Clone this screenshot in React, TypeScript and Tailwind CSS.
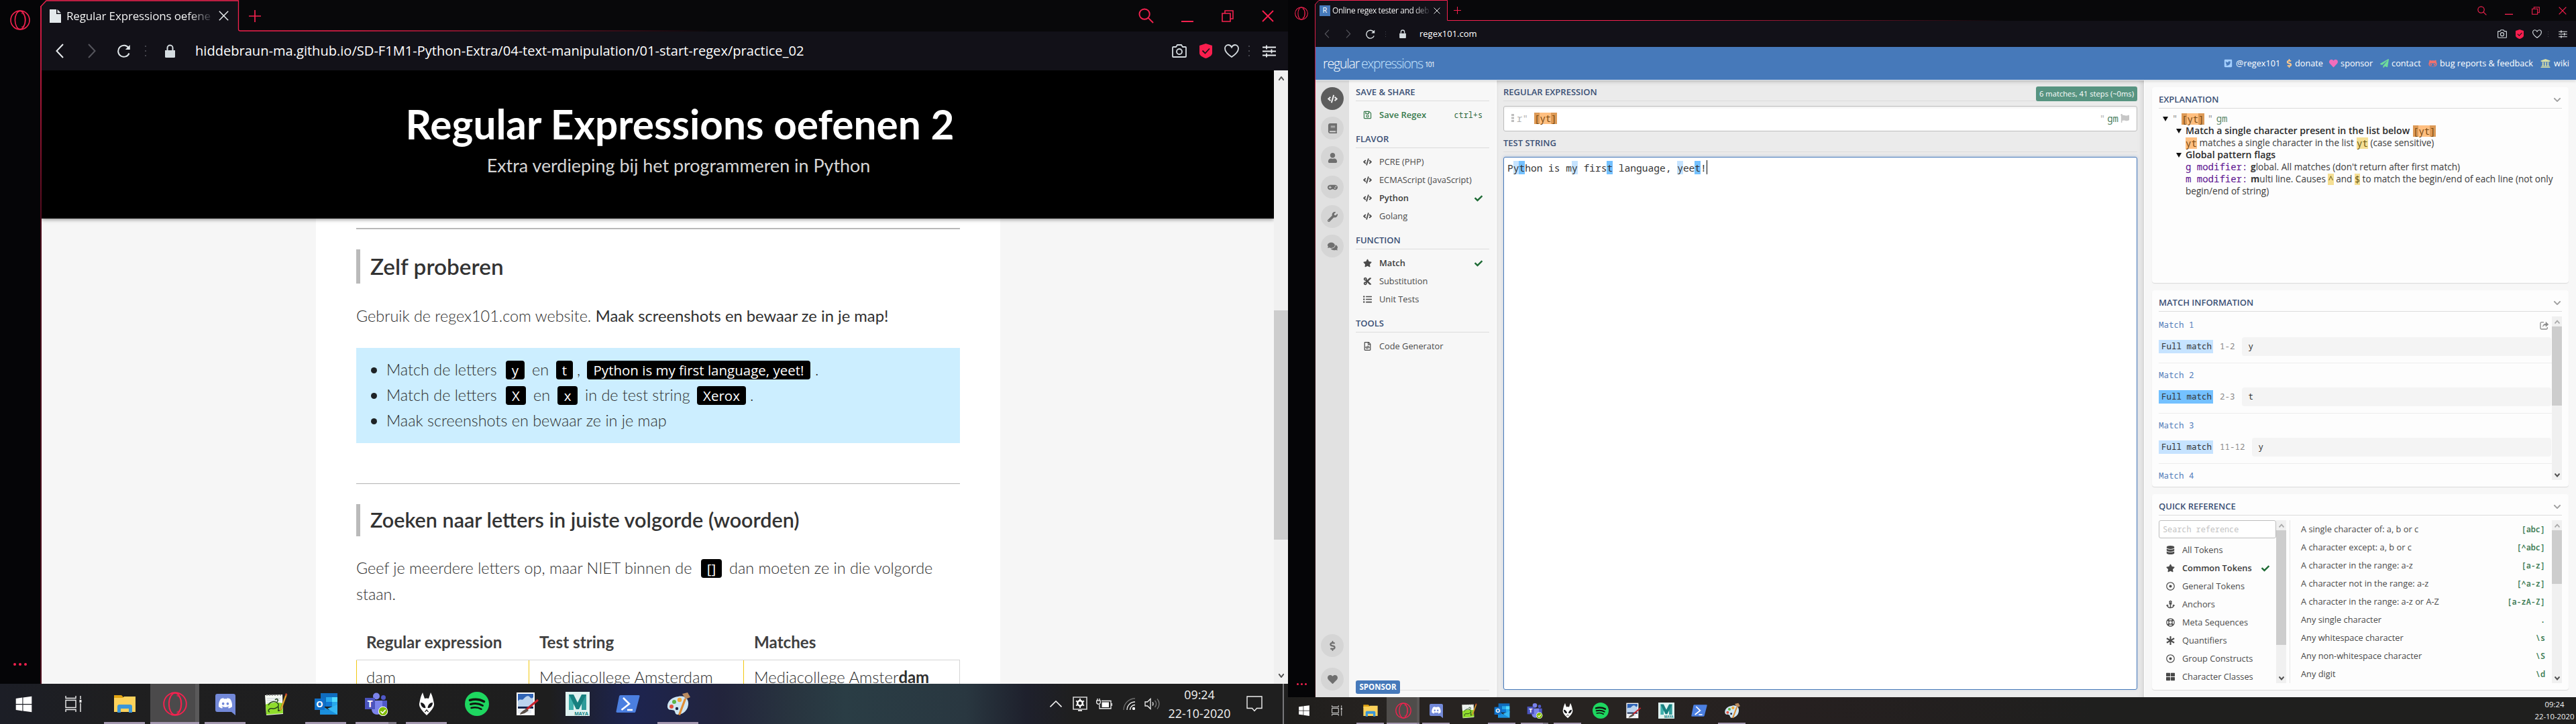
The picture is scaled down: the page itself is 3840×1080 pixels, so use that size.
import React from 'react';
import {
  FaWindows, FaDiscord, FaCode, FaBook, FaUser, FaGamepad, FaWrench, FaComments, FaDollarSign,
  FaHeart, FaStar, FaCut, FaListUl, FaCheck, FaDatabase, FaAnchor, FaRegLifeRing, FaAsterisk, FaThLarge,
  FaTwitterSquare, FaPaperPlane, FaGithubAlt, FaUniversity, FaFlag, FaChevronDown, FaRegSave, FaRegFileCode,
  FaRegDotCircle,
} from 'react-icons/fa';

const LATO = "font-['Lato','Liberation_Sans',sans-serif]";
const OPEN = "font-['Open_Sans','Noto_Sans',sans-serif]";
const MONO = "font-['Noto_Sans_Mono','DejaVu_Sans_Mono',monospace]";

type C = { className?: string };

/* ---------- browser chrome icons ---------- */

const Opera = ({ className = '' }: C) => (
  <svg viewBox="0 0 30 30" className={className} fill="none" stroke="#f4224f">
    <circle cx="15" cy="15" r="14" strokeWidth="1.6" />
    <ellipse cx="15" cy="15" rx="7.6" ry="13.6" strokeWidth="1.6" />
    <path d="M17 4.5c4.5 1 6 6 6 10.500s-1.500 9.500-6 10.500" strokeWidth="1.400" opacity="0.700" />
  </svg>
);
const Search = ({ className = '' }: C) => (
  <svg viewBox="0 0 24 24" className={className} fill="none" stroke="#f4224f" strokeWidth="2">
    <circle cx="9.500" cy="9.500" r="8" /><path d="M15.500 15.500l7.500 7.500" />
  </svg>
);
const Minimise = ({ className = '' }: C) => (
  <svg viewBox="0 0 18 18" className={className} stroke="#f4224f" strokeWidth="2"><path d="M0 17h18" /></svg>
);
const Restore = ({ className = '' }: C) => (
  <svg viewBox="0 0 18 18" className={className} fill="none" stroke="#f4224f" strokeWidth="1.600">
    <path d="M1 5h12v12H1zM5 5V1h12v12h-4" />
  </svg>
);
const Cross = ({ className = '' }: C) => (
  <svg viewBox="0 0 18 18" className={className} fill="none" stroke="currentColor" strokeWidth="1.800"><path d="M1 1l16 16M17 1L1 17" /></svg>
);
const Plus = ({ className = '' }: C) => (
  <svg viewBox="0 0 18 18" className={className} stroke="#f4224f" strokeWidth="1.700"><path d="M9 0v18M0 9h18" /></svg>
);
const Angle = ({ className = '' }: C) => (
  <svg viewBox="0 0 12 22" className={className} fill="none" stroke="currentColor" strokeWidth="2"><path d="M11 1L1.500 11 11 21" /></svg>
);
const Reload = ({ className = '' }: C) => (
  <svg viewBox="0 0 20 20" className={className} fill="none" stroke="#dfe5e8" strokeWidth="2">
    <path d="M17.500 13.500A8.500 8.500 0 1 1 17 6" /><path d="M18.800 1v7h-7z" fill="#dfe5e8" stroke="none" />
  </svg>
);
const Dots = ({ className = '' }: C) => (
  <svg viewBox="0 0 2 16" className={className} fill="#44444c"><path d="M0 0h2v2H0zM0 7h2v2H0zM0 14h2v2H0z" /></svg>
);
const Lock = ({ className = '' }: C) => (
  <svg viewBox="0 0 15 20" className={className} fill="#d5dce0">
    <path d="M0 9h15v9.500a1.500 1.500 0 0 1-1.500 1.500h-12A1.500 1.500 0 0 1 0 18.500z" />
    <path d="M3.500 9V5.500a4 4 0 0 1 8 0V9" fill="none" stroke="#d5dce0" strokeWidth="2" />
  </svg>
);
const Camera = ({ className = '' }: C) => (
  <svg viewBox="0 0 22 20" className={className} fill="none" stroke="#d5dce0" strokeWidth="1.800">
    <path d="M2 4h4l2-3h6l2 3h4a1 1 0 0 1 1 1v13a1 1 0 0 1-1 1H2a1 1 0 0 1-1-1V5a1 1 0 0 1 1-1z" /><circle cx="11" cy="11" r="4" />
  </svg>
);
const Shield = ({ className = '' }: C) => (
  <svg viewBox="0 0 19 22" className={className}>
    <path d="M9.500 0L19 3v11c0 4-5 6.500-9.500 8C5 20.500 0 18 0 14V3z" fill="#fa1e4e" />
    <path d="M4.500 10.500l4 4 6.500-7" fill="none" stroke="#16151a" strokeWidth="1.800" />
  </svg>
);
const HeartLine = ({ className = '' }: C) => (
  <svg viewBox="0 0 22 20" className={className} fill="none" stroke="#d5dce0" strokeWidth="1.800">
    <path d="M11 19C5 15 1 11 1 6.500 1 3 3.500 1 6 1c2.300 0 4 1.500 5 3.500C12 2.500 13.700 1 16 1c2.500 0 5 2 5 5.500C21 11 17 15 11 19z" />
  </svg>
);
const Sliders = ({ className = '' }: C) => (
  <svg viewBox="0 0 20 19" className={className} stroke="#e8ecee" strokeWidth="1.800"><path d="M0 3.500h20M0 9.500h20M0 15.500h20M6 .5v6M13.500 6.500v6M6 12.500v6" /></svg>
);

/* ---------- task bar icons ---------- */

const TaskView = ({ className = '' }: C) => (
  <svg viewBox="0 0 25 24" className={className} fill="none" stroke="#f0f0f0" strokeWidth="1.400">
    <path d="M1 0v3.500h15V0M1 6.500h15v11H1zM1 24v-3.500h15V24M23 0v5M23 11v13" /><path d="M21.500 6h3v4h-3z" fill="#f0f0f0" stroke="none" />
  </svg>
);
const Folder = ({ className = '' }: C) => (
  <svg viewBox="0 0 36 36" className={className}>
    <path d="M2 5h11l3 3v4H2z" fill="#e0a211" /><path d="M2 9h13l2-2h17v23H2z" fill="#fcd25b" />
    <path d="M7 31v-9a3 3 0 0 1 3-3h16a3 3 0 0 1 3 3v9h-5v-6H12v6z" fill="#3b97d8" />
  </svg>
);
const Discord = ({ className = '' }: C) => (
  <svg viewBox="0 0 36 36" className={className}>
    <path d="M6 3h24a3 3 0 0 1 3 3v29l-6-5H6a3 3 0 0 1-3-3V6a3 3 0 0 1 3-3z" fill="#7389d8" />
    <FaDiscord x={7} y={6} size={22} color="#fff" />
  </svg>
);
const NotepadPP = ({ className = '' }: C) => (
  <svg viewBox="0 0 36 36" className={className}>
    <path d="M2 5l26-1 1 29-25 2z" fill="#f6faf3" /><path d="M3 19c8-4 17-4 25-2l1 15-25 2z" fill="#8fdc2c" />
    <path d="M4 5h22" stroke="#999" strokeWidth="2" strokeDasharray="2 2" /><path d="M5 10h20M5 13h20M5 16h10" stroke="#c8d0d8" />
    <path d="M7 20c3-6 10-7 14-3s-3 9-8 8-8 4-4 5M17 12c3-3 6 0 3 3M21 28h3M22 22v7" fill="none" stroke="#27471a" strokeWidth="1.500" />
    <path d="M33 3l2 1-8 22-3 3 1-4z" fill="#f2b233" stroke="#8a5a12" strokeWidth=".6" /><path d="M33 2l2 1-1 3-2-1z" fill="#c93a2c" />
  </svg>
);
const Outlook = ({ className = '' }: C) => (
  <svg viewBox="0 0 36 36" className={className}>
    <path d="M10 2h25v20H10z" fill="#0f6cbd" /><path d="M18 8h9v7h-9z" fill="#28a8ea" /><path d="M27 8h8v7h-8z" fill="#50d9ff" />
    <path d="M18 15h9v7h-9z" fill="#0f78d4" /><path d="M27 15h8v7h-8z" fill="#28a8ea" />
    <path d="M9 19l13 8 13-8v15H9z" fill="#1b90dd" /><path d="M35 19v15L20 25z" fill="#35b6f2" />
    <path d="M1 10h15v17H1z" fill="#1170c9" />
    <text x="8.500" y="23" textAnchor="middle" fontSize="13" fontWeight="700" fill="#fff" fontFamily="Open Sans">O</text>
  </svg>
);
const Teams = ({ className = '' }: C) => (
  <svg viewBox="0 0 36 36" className={className}>
    <circle cx="18" cy="6.500" r="5" fill="#7b83eb" /><circle cx="28.500" cy="8.500" r="3.500" fill="#5059c9" />
    <path d="M24 13h10v10c0 4-3 6-6 6h-4z" fill="#5059c9" /><path d="M11 13h16v13c0 5-4 8-8 8s-8-3-8-8z" fill="#7b83eb" />
    <path d="M1 9h15v17H1z" fill="#4b53bc" />
    <text x="8.500" y="22.500" textAnchor="middle" fontSize="14" fontWeight="700" fill="#fff" fontFamily="Open Sans">T</text>
    <circle cx="28" cy="29" r="7.200" fill="#fff" /><circle cx="28" cy="29" r="6.200" fill="#7fba00" />
    <path d="M24.500 29l2.800 2.800 4.500-5" fill="none" stroke="#fff" strokeWidth="1.600" />
  </svg>
);
const Foobar = ({ className = '' }: C) => (
  <svg viewBox="0 0 36 36" className={className}>
    <path d="M12 1l3 9c2-.8 4-.8 6 0l3-9c3 6 4 11 5 17 .5 5-5 11-8 14l-3 3-3-3c-3-3-8.500-9-8-14 1-6 2-11 5-17z" fill="#fff" />
    <path d="M9 16c4 0 7 3 7.500 8-4 1-7.500-3-7.500-8zM27 16c-4 0-7 3-7.500 8 4 1 7.500-3 7.500-8z" fill="#16161a" />
    <path d="M15.500 30l2.500-3 2.500 3" fill="none" stroke="#222" strokeWidth="1.200" />
  </svg>
);
const Spotify = ({ className = '' }: C) => (
  <svg viewBox="0 0 36 36" className={className} fill="none" stroke="#10150f" strokeLinecap="round">
    <circle cx="18" cy="18" r="18" fill="#1ed760" stroke="none" />
    <path d="M7.500 12.500c7-2 15-1.300 21 2" strokeWidth="3.600" />
    <path d="M8.500 18.500c6-1.700 13-1 18 2" strokeWidth="3" />
    <path d="M9.500 24c5-1.300 10.500-.8 15 1.800" strokeWidth="2.500" />
  </svg>
);
const ImageEditor = ({ className = '' }: C) => (
  <svg viewBox="0 0 36 36" className={className}>
    <path d="M2 1h27v34H2z" fill="#fdfdfd" /><path d="M4 3h23v19H4z" fill="#2f63b5" />
    <path d="M4 14c3-5 6 0 9-4s7-5 9-2 4 1 5 0v16H4z" fill="#bcd4ef" /><path d="M4 22h23v3H4z" fill="#16294f" /><path d="M4 26h20v6H4z" fill="#e8ecf2" />
    <path d="M34 12L16 27" stroke="#c8222c" strokeWidth="3" /><path d="M17 25l3 3-6 4-7 2c1-4 5-6 10-9z" fill="#5b5048" />
  </svg>
);
const Maya = ({ className = '' }: C) => (
  <svg viewBox="0 0 36 36" className={className}>
    <path d="M0 0h36v36H0z" fill="#dff2f0" />
    <path d="M5 4h7v23H5z" fill="#3fb0ac" /><path d="M24 4h7v23h-7z" fill="#2f9c9a" /><path d="M5 4h7l6 12 6-12h7L20 26h-4z" fill="#17807f" />
    <text x="23.500" y="34.500" textAnchor="middle" fontSize="7" fontWeight="700" fill="#0a7f80" fontFamily="Open Sans">MAYA</text>
  </svg>
);
const PowerShell = ({ className = '' }: C) => (
  <svg viewBox="0 0 36 36" className={className}>
    <path d="M7 5h27a1.500 1.500 0 0 1 1.400 2L29.500 29.500A2 2 0 0 1 27.500 31H2a1.500 1.500 0 0 1-1.400-2L5 6.500A2 2 0 0 1 7 5z" fill="#4b7fe0" />
    <path d="M11 9l9 9-11.500 9M17 27h8" fill="none" stroke="#fff" strokeWidth="2.600" />
  </svg>
);
const Paint = ({ className = '' }: C) => (
  <svg viewBox="0 0 36 36" className={className}>
    <path d="M18 7c9-2 16 3 15 12-1 10-9 15-16 15-4 0-3-4-5-6s-9 1-10-5C1 14 9 8 18 7z" fill="#cfe6f3" />
    <circle cx="8" cy="22" r="3" fill="#e2503f" /><circle cx="12" cy="15" r="3" fill="#5cb346" /><circle cx="20" cy="12" r="3.200" fill="#f0a93a" />
    <circle cx="16" cy="25" r="2.200" fill="#1b2445" />
    <path d="M27 10l3 1-9 24-3-1z" fill="#e08c33" /><path d="M24 3l8-2 4 7-7 3z" fill="#b98a5e" />
  </svg>
);

const APPS = [Folder, Opera, Discord, NotepadPP, Outlook, Teams, Foobar, Spotify, ImageEditor, Maya, PowerShell, Paint];
const RUNNING = [0, 2, 4, 5, 6, 11];

function Apps({ large }: { large: boolean }) {
  return (
    <>
      <div className={large ? 'flex h-full w-[71px] items-center justify-center' : 'flex h-full w-12 items-center justify-center'}>
        <FaWindows className={large ? 'size-[27px] text-white' : 'size-[18px] text-white'} />
      </div>
      <div className={large ? 'flex h-full w-[77px] items-center justify-center' : 'flex h-full w-[50px] items-center justify-center'}>
        <TaskView className={large ? 'h-6 w-[25px]' : 'h-4 w-4'} />
      </div>
      {APPS.map((Icon, i) => (
        <div key={i} className={large ? 'relative flex h-full w-[75px] items-center justify-center' : 'relative flex h-full w-[49px] items-center justify-center'}>
          {i === 1 && (
            <div className={large ? 'absolute inset-y-0 left-px right-px flex' : 'absolute inset-y-0 left-0 right-0 flex'}>
              <div className={large ? 'flex-1 border-b-[3px] border-[#a498b0] bg-[#4b4a4b]' : 'flex-1 border-b-2 border-[#a498b0] bg-[#4f4c4a]'} />
              <div className={large ? 'w-1.5 border-b-[3px] border-[#a498b0] bg-[#5a595a]' : 'w-1 border-b-2 border-[#8d8398] bg-[#5a5756]'} />
            </div>
          )}
          <Icon className={large ? 'relative size-9' : 'relative size-6'} />
          {RUNNING.includes(i) && (
            <div className={large ? 'absolute bottom-0 left-[7px] flex h-[3px] w-[61px] bg-[#a498b0]' : 'absolute bottom-0 left-1 flex h-0.5 w-[41px] bg-[#a498b0]'}>
              {i === 5 && <div className={large ? 'ml-auto w-3 bg-[#7d7684]' : 'ml-auto w-2 bg-[#7d7684]'} />}
            </div>
          )}
        </div>
      ))}
    </>
  );
}

const Tray = () => (
  <div className="ml-auto flex h-full items-center">
    <svg viewBox="0 0 18 10" className="h-2.5 w-[18px]" fill="none" stroke="#f0f0f0" strokeWidth="1.600"><path d="M.5 9.500L9 1l8.500 8.500" /></svg>
    <svg viewBox="0 0 22 22" className="ml-4 size-[22px]" fill="none" stroke="#d8d8d8" strokeWidth="1.600">
      <path d="M1 1h20v18H1z" /><circle cx="11" cy="10" r="3.800" strokeWidth="2.600" stroke="#fff" /><path d="M8 21h6" strokeWidth="2" />
      <path d="M11 3v3M11 14v3M5 6.500l2.500 1.500M14.500 12l2.500 1.500M5 13.500L7.500 12M14.500 8L17 6.500" stroke="#fff" strokeWidth="2" />
    </svg>
    <svg viewBox="0 0 24 16" className="ml-[13px] h-4 w-6" fill="none" stroke="#f0f0f0" strokeWidth="1.300">
      <path d="M8 3.500h14v11.500H5V9" /><path d="M8.500 5.500h10.500v7.500H8.500z" fill="#fff" stroke="none" /><path d="M23.500 7v4M2 0v3M5 0v3M.7 3.200h5.600v2.300a2.800 2.800 0 0 1-5.600 0z" />
    </svg>
    <svg viewBox="0 0 18 18" className="ml-4 size-[18px]" fill="none" stroke="#f0f0f0" strokeWidth="1.300">
      <path d="M18 1A17 17 0 0 0 1 18" stroke="#6e6e6e" /><path d="M18 6A12 12 0 0 0 6 18M18 10.500A7.500 7.500 0 0 0 10.500 18" /><circle cx="16" cy="16" r="1.500" fill="#fff" />
    </svg>
    <svg viewBox="0 0 23 18" className="ml-3.5 h-[18px] w-[23px]" fill="none" stroke="#f0f0f0" strokeWidth="1.300">
      <path d="M1 6h3.500L9 1.500v15L4.500 12H1zM12 6.500a4 4 0 0 1 0 5" /><path d="M15.500 4a7 7 0 0 1 0 10M19 1.500a11 11 0 0 1 0 15" stroke="#7a7a7a" />
    </svg>
    <div className={`ml-3 flex w-[94px] flex-col items-center text-[17.800px] leading-[28px] text-[#f2f2f2] ${OPEN}`}>
      <span>09:24</span><span>22-10-2020</span>
    </div>
    <svg viewBox="0 0 24 24" className="ml-[23px] size-6" fill="none" stroke="#f0f0f0" strokeWidth="1.400"><path d="M1 1h22v17.500h-7.500L12 22.500l-3.500-4H1z" /></svg>
    <div className="ml-[30px] mr-1.5 h-full w-0.5 bg-[#77777a]" />
  </div>
);

/* ---------- left monitor ---------- */

const Code = ({ children, className = '' }: { children: React.ReactNode; className?: string }) => (
  <span className={`inline-flex h-7 items-center justify-center whitespace-nowrap rounded bg-black text-[20.500px] font-normal leading-7 text-white ${OPEN} ${className}`}>{children}</span>
);
const Bullet = ({ children }: { children: React.ReactNode }) => (
  <li className="flex h-[38px] items-center">
    <span className="mr-3.5 size-[9px] rounded-full bg-[#1f2326]" />
    {children}
  </li>
);

function LeftMonitor() {
  return (
    <div className="flex h-[1080px] w-[1920px] flex-col">
      <div className="flex h-[1020px] bg-[#050507]">
        <div className="flex w-[60px] flex-col items-center justify-between pb-[27px] pt-[15px]">
          <Opera className="size-[30px]" />
          <div className="flex gap-1">
            <i className="size-1 rounded-full bg-[#f4224f]" /><i className="size-1 rounded-full bg-[#f4224f]" /><i className="size-1 rounded-full bg-[#f4224f]" />
          </div>
        </div>
        <div className="w-0.5 bg-[linear-gradient(#050507_0_9px,#d81c45_9px,#b0183a_120px,#4c0b1c_330px,#4c0b1c)]" />
        <div className="flex flex-1 flex-col">
          <div className="relative flex h-[47px] items-center bg-[#08080a]">
            <div className="flex h-full w-[294px] items-center bg-[#121118] pl-3 [clip-path:polygon(8px_0,100%_0,100%_100%,0_100%,0_9px)]">
              <svg viewBox="0 0 17 20" className="h-5 w-[17px]"><path d="M0 0h10v7h7v13H0z" fill="#e4e9ec" /><path d="M11.500 0L17 5.500h-5.500z" fill="#e4e9ec" /></svg>
              <span className={`ml-2 w-[216px] whitespace-nowrap bg-[linear-gradient(90deg,#fff_84%,#2a2a33)] bg-clip-text text-[17px] tracking-[-0.150px] text-transparent ${OPEN}`}>Regular Expressions oefene</span>
              <Cross className="ml-[11px] size-[15px] text-[#e8ecee]" />
            </div>
            <Plus className="ml-[15px] size-[18px]" />
            <svg viewBox="0 0 1000 47" className="absolute left-[-2px] top-0 h-[47px] w-[1000px]" fill="none">
              <defs>
                <linearGradient id="fadeLeft" gradientUnits="userSpaceOnUse" x1="450" x2="1000" y1="0" y2="0">
                  <stop stopColor="#f4224f" /><stop offset="1" stopColor="#f4224f" stopOpacity="0" />
                </linearGradient>
              </defs>
              <path d="M1 9.500L9 1h286.500v42.500q0 2.500 2.500 2.500h702" stroke="url(#fadeLeft)" strokeWidth="1.300" />
            </svg>
            <div className="ml-auto flex items-center pr-[21px]">
              <Search className="mr-[41px] size-[23px]" /><Minimise className="mr-[42px] size-[18px]" />
              <Restore className="mr-[42px] size-[18px]" /><Cross className="size-[18px] text-[#fa1e4e]" />
            </div>
          </div>
          <div className="flex h-[58px] items-center bg-[#121118] pl-[21px] pr-[18px]">
            <Angle className="h-[22px] w-3 text-[#e8ecee]" />
            <Angle className="ml-[36px] h-[22px] w-3 rotate-180 text-[#55555c]" />
            <Reload className="ml-[32px] size-5" />
            <Dots className="ml-[21px] h-4 w-0.5" />
            <Lock className="ml-[28px] h-5 w-[15px]" />
            <span className={`ml-[30px] text-[20.090px] text-white ${OPEN}`}>hiddebraun-ma.github.io/SD-F1M1-Python-Extra/04-text-manipulation/01-start-regex/practice_02</span>
            <Camera className="ml-auto h-5 w-[22px]" /><Shield className="ml-[19px] h-[22px] w-[19px]" />
            <HeartLine className="ml-[18px] h-5 w-[22px]" /><Dots className="ml-[14px] h-4 w-0.5" /><Sliders className="ml-[19px] h-[19px] w-5" />
          </div>
          <div className="flex h-[915px]">
            <div className={`flex flex-1 flex-col overflow-hidden bg-[#f6f6f6] ${LATO}`}>
              <div className="z-10 flex h-[221px] shrink-0 flex-col items-center bg-black pl-[62px] pt-[50px] shadow-[0_1px_6px_rgba(0,0,0,0.5)]">
                <h1 className="ml-1 h-[60px] text-[60.300px] font-bold leading-[60px] text-white">Regular Expressions oefenen 2</h1>
                <p className="mt-3.5 text-[26.900px] leading-9 text-[#d6d6d6]">Extra verdieping bij het programmeren in Python</p>
              </div>
              <div className="ml-[409px] flex h-[694px] w-[1020px] shrink-0 flex-col bg-white px-[60px] pt-3.5 text-[23.400px] font-light text-[#2e2e2e]">
                <div className="h-0.5 shrink-0 bg-[#b8b8b8]" />
                <h2 className="mt-[30px] flex h-[51px] shrink-0 items-center border-l-[6px] border-[#bababa] pl-[15px] text-[33.300px] font-semibold text-[#333]">Zelf proberen</h2>
                <p className="mt-[29px] h-[38px] shrink-0 whitespace-pre leading-[38px]">Gebruik de regex101.com website. <b className="text-[23.750px] font-normal text-[#303030]">Maak screenshots en bewaar ze in je map!</b></p>
                <ul className="mt-[29px] h-[142px] shrink-0 bg-[#cceeff] pl-[22px] pt-3.5">
                  <Bullet>
                    <span className="w-[178px]">Match de letters</span><Code className="w-7">y</Code><span className="ml-[11px] w-9">en</span><Code className="w-[25px]">t</Code>
                    <span className="ml-1.5 w-[15px]">,</span><Code className="w-[333px]">Python is my first language, yeet!</Code><span className="ml-[7px]">.</span>
                  </Bullet>
                  <Bullet>
                    <span className="w-[178px]">Match de letters</span><Code className="w-[30px]">X</Code><span className="ml-[11px] w-9">en</span><Code className="w-[30px]">x</Code>
                    <span className="ml-[11px] w-[167px]">in de test string</span><Code className="w-[73px]">Xerox</Code><span className="ml-1.5">.</span>
                  </Bullet>
                  <Bullet>Maak screenshots en bewaar ze in je map</Bullet>
                </ul>
                <div className="mt-[60px] h-px shrink-0 bg-[#b3b3b3]" />
                <h2 className="mt-[30px] flex h-12 shrink-0 items-center border-l-[6px] border-[#bababa] pl-[15px] text-[30.550px] font-semibold text-[#333]">Zoeken naar letters in juiste volgorde (woorden)</h2>
                <div className="mt-[29px] flex h-[38px] shrink-0 items-center"><span className="w-[514px] whitespace-nowrap">Geef je meerdere letters op, maar NIET binnen de</span><Code className="w-[31px]">[]</Code><span className="ml-[11px]">dan moeten ze in die volgorde</span></div>
                <p className="h-[38px] shrink-0 leading-[38px]">staan.</p>
                <div className="mt-7 grid h-[51px] shrink-0 grid-cols-[257px_320px_323px] items-center text-[24.200px] font-bold text-[#404040]">
                  <span className="pl-[15px]">Regular expression</span><span className="pl-4">Test string</span><span className="pl-4">Matches</span>
                </div>
                <div className="grid h-[36px] shrink-0 grid-cols-[257px_320px_323px] border-r border-t border-[#d5d5d5] text-[23.900px] leading-[49px]">
                  <span className="border-l border-[#f2c811] pl-3.5">dam</span><span className="border-l border-[#f2c811] pl-[15px]">Mediacollege Amsterdam</span>
                  <span className="border-l border-[#f2c811] pl-[15px]">Mediacollege Amster<b className="font-bold">dam</b></span>
                </div>
              </div>
            </div>
            <div className="flex w-[21px] flex-col items-center justify-between bg-[#f0f0f0] py-[9px]">
              <svg viewBox="0 0 8 6" className="h-1.5 w-2" fill="none" stroke="#505050" strokeWidth="2"><path d="M0 6l4-5 4 5" /></svg>
              <div className="mb-[12px] h-[342px] w-[21px] translate-y-[77px] bg-[#cdcdcd]" />
              <svg viewBox="0 0 8 6" className="h-1.5 w-2" fill="none" stroke="#505050" strokeWidth="2"><path d="M0 0l4 5 4-5" /></svg>
            </div>
          </div>
        </div>
      </div>
      <div className="flex h-[60px] items-center bg-[linear-gradient(90deg,#1c1e26_0,#1f1f20_180px,#1e1e1e_820px,#1d2450_940px,#22243c_1075px,#28343f_1180px,#2a3d45_1260px,#293740_1440px,#1e202c_1530px,#1f1f1f_1600px)]">
        <Apps large />
        <Tray />
      </div>
    </div>
  );
}

/* ---------- right monitor ---------- */

type Item = { icon: React.ComponentType<{ className?: string }>; label: string; bold?: boolean; check?: boolean };

const Section = ({ title, children }: { title: string; children: React.ReactNode }) => (
  <section className="mb-[11px]">
    <Heading>{title}</Heading>
    <div className="pt-[7px]">{children}</div>
  </section>
);
const Heading = ({ children, chevron }: { children: React.ReactNode; chevron?: boolean }) => (
  <h3 className="box-content flex h-6 shrink-0 items-center justify-between border-b border-[#dcdcdc] text-[13px] font-semibold text-[#3a5075]">
    {children}
    {chevron && <FaChevronDown className="mr-px size-3 text-[#a0a0a0]" />}
  </h3>
);
const Row = ({ icon: Icon, label, bold, check }: Item) => (
  <div className="flex h-[27px] items-center text-[12.800px] text-[#4a4a4a]">
    <Icon className="ml-[11px] size-[13px]" />
    <span className={bold ? 'ml-[11px] font-semibold text-[#3c3c3c]' : 'ml-[11px]'}>{label}</span>
    {check && <FaCheck className="ml-auto mr-2.5 size-3 text-[#1e6b35]" />}
  </div>
);
const Bar = ({ thumb }: { thumb: React.ReactNode }) => (
  <div className="flex h-full w-[15px] shrink-0 flex-col items-center bg-[#f0f0f0]">
    <div className="flex h-[15px] items-center"><svg viewBox="0 0 8 6" className="h-1.5 w-2" fill="none" stroke="#a8a8a8" strokeWidth="1.800"><path d="M.5 5.500l3.500-4 3.500 4" /></svg></div>
    {thumb}
    <div className="mt-auto flex h-[15px] items-center"><svg viewBox="0 0 8 6" className="h-1.5 w-2" fill="none" stroke="#505050" strokeWidth="2"><path d="M.5 .5l3.500 4 3.500-4" /></svg></div>
  </div>
);
const Round = ({ icon: Icon, active }: { icon: React.ComponentType<{ className?: string }>; active?: boolean }) => (
  <div className={active ? 'flex size-[34px] items-center justify-center rounded-full bg-[#5d5d5d] text-[#f0f0f0]' : 'flex size-[34px] items-center justify-center rounded-full bg-[#d5d5d5] text-[#6f6f6f]'}>
    <Icon className="size-[15px]" />
  </div>
);
const Yt = () => (
  <span className={`inline-block h-[17px] text-[14px] leading-[17px] text-[#7a4a10] ${MONO}`}>
    <span className="inline-block bg-[#dd9a57]">[</span><span className="inline-block bg-[#ffbf80]">yt</span><span className="inline-block bg-[#dd9a57]">]</span>
  </span>
);
const Tri = ({ className = '' }: C) => (
  <svg viewBox="0 0 8 7" className={`h-[7px] w-2 ${className}`}><path d="M0 0h8L4 7z" fill="#111" /></svg>
);

const SAMPLE: [string, number][] = [
  ['P', 0], ['y', 1], ['t', 2], ['hon is m', 0], ['y', 1], [' firs', 0], ['t', 2], [' language, ', 0], ['y', 1], ['ee', 0], ['t', 2], ['!', 0],
];
const MARKS = ['', 'bg-[#c6e3ff]', 'bg-[#74c1ff]'];

const MATCHES = [
  { n: 1, range: '1-2', text: 'y', dark: false },
  { n: 2, range: '2-3', text: 't', dark: true },
  { n: 3, range: '11-12', text: 'y', dark: false },
];
const TOKENS: Item[] = [
  { icon: FaDatabase, label: 'All Tokens' },
  { icon: FaStar, label: 'Common Tokens', bold: true, check: true },
  { icon: FaRegDotCircle, label: 'General Tokens' },
  { icon: FaAnchor, label: 'Anchors' },
  { icon: FaRegLifeRing, label: 'Meta Sequences' },
  { icon: FaAsterisk, label: 'Quantifiers' },
  { icon: FaRegDotCircle, label: 'Group Constructs' },
  { icon: FaThLarge, label: 'Character Classes' },
];
const REFS = [
  ['A single character of: a, b or c', '[abc]'],
  ['A character except: a, b or c', '[^abc]'],
  ['A character in the range: a-z', '[a-z]'],
  ['A character not in the range: a-z', '[^a-z]'],
  ['A character in the range: a-z or A-Z', '[a-zA-Z]'],
  ['Any single character', '.'],
  ['Any whitespace character', '\\s'],
  ['Any non-whitespace character', '\\S'],
  ['Any digit', '\\d'],
];

const Chrome = () => (
  <>
    <div className="relative flex h-[31px] items-center bg-[#08080a]">
      <div className="flex h-full w-[196px] items-center bg-[#121118] pl-1.5 [clip-path:polygon(5px_0,100%_0,100%_100%,0_100%,0_6px)]">
        <span className={`flex size-4 items-center justify-center bg-[#4679ba] text-[11px] text-white ${OPEN}`}>R</span>
        <span className={`ml-[3px] w-[145px] whitespace-nowrap bg-[linear-gradient(90deg,#fff_84%,#2a2a33)] bg-clip-text text-[12px] tracking-[-0.440px] text-transparent ${OPEN}`}>Online regex tester and deb</span>
        <Cross className="ml-[6px] size-[10px] text-[#e8ecee]" />
      </div>
      <Plus className="ml-[10px] size-[11px]" />
      <svg viewBox="0 0 1030 31" className="absolute left-[-1px] top-0 h-[31px] w-[1030px]" fill="none">
        <defs>
          <linearGradient id="fadeRight" gradientUnits="userSpaceOnUse" x1="450" x2="1030" y1="0" y2="0">
            <stop stopColor="#f4224f" /><stop offset="1" stopColor="#f4224f" stopOpacity="0" />
          </linearGradient>
        </defs>
        <path d="M.5 6.500L6 .5h191.500v30h832" stroke="url(#fadeRight)" />
      </svg>
      <div className="ml-auto flex items-center pr-3.5">
        <Search className="mr-[27px] size-3.5" /><Minimise className="mr-[28px] size-3" /><Restore className="mr-[28px] size-3" /><Cross className="size-3 text-[#fa1e4e]" />
      </div>
    </div>
    <div className="flex h-[39px] items-center bg-[#121118] pl-[13px] pr-[13px]">
      <Angle className="h-[13px] w-2 text-[#55555c]" />
      <Angle className="ml-6 h-[13px] w-2 rotate-180 text-[#55555c]" />
      <Reload className="ml-[22px] size-3.5" />
      <Dots className="ml-[15px] h-2.5 w-px" />
      <Lock className="ml-5 h-[13px] w-2.5" />
      <span className={`ml-5 text-[13px] text-white ${OPEN}`}>regex101.com</span>
      <Camera className="ml-auto h-[13px] w-3.5" /><Shield className="ml-[13px] h-3.5 w-3" /><HeartLine className="ml-[13px] h-[13px] w-3.5" />
      <Dots className="ml-[9px] h-2.5 w-px" /><Sliders className="ml-[15px] h-3 w-[13px]" />
    </div>
  </>
);

const Link = ({ icon: Icon, color, size, className, children }: { icon: Item['icon']; color: string; size: string; className: string; children: React.ReactNode }) => (
  <span className={`flex items-center whitespace-nowrap ${className}`}><Icon className={`${size} ${color}`} />{children}</span>
);

const Header = () => (
  <header className="z-10 flex h-[49px] items-center bg-[#4679ba] pl-[11px] pr-2.5 shadow-[0_1px_0_#dfe6ef,0_2px_4px_rgba(0,0,0,0.15)]">
    <div className="flex items-center text-[19.500px] font-light text-white">
      <span className="w-[57px] tracking-[-1.150px]">regular</span>
      <span className="w-[95px] tracking-[-1.180px] text-[#c4e4ff]">expressions</span>
      <span className="pt-1 text-[10px] font-normal tracking-[-1px]">101</span>
    </div>
    <div className="ml-auto flex items-center text-[12.700px] text-white">
      <Link icon={FaTwitterSquare} color="mr-[5px] text-[#a5d0ff]" size="size-[13px]" className="w-[91px]">@regex101</Link>
      <Link icon={FaDollarSign} color="mr-[2px] text-[#ffc98a]" size="size-[13px]" className="w-[66px]">donate</Link>
      <Link icon={FaHeart} color="mr-1 text-[#f26dbb]" size="size-[13px]" className="w-[76px]">sponsor</Link>
      <Link icon={FaPaperPlane} color="mr-1 text-[#6fdc9a]" size="size-[13px]" className="w-[72px]">contact</Link>
      <Link icon={FaGithubAlt} color="mr-1 text-[#f3716d]" size="size-[13px]" className="w-[167px]">bug reports &amp; feedback</Link>
      <Link icon={FaUniversity} color="mr-[5px] text-[#d9dfa5]" size="size-[15px]" className="">wiki</Link>
    </div>
  </header>
);

const Menu = () => (
  <div className="flex w-[220px] flex-col border-r border-white bg-[#f7f7f7] px-2.5 pt-[7px]">
    <Section title="SAVE & SHARE">
      <div className="flex h-[27px] items-center text-[13px] font-semibold text-[#387a4c]">
        <FaRegSave className="ml-[11px] size-[13px]" /><span className="ml-[11px]">Save Regex</span>
        <span className={`ml-auto mr-2.5 text-[11.800px] font-normal text-[#2f6a40] ${MONO}`}>ctrl+s</span>
      </div>
    </Section>
    <Section title="FLAVOR">
      <Row icon={FaCode} label="PCRE (PHP)" /><Row icon={FaCode} label="ECMAScript (JavaScript)" />
      <Row icon={FaCode} label="Python" bold check /><Row icon={FaCode} label="Golang" />
    </Section>
    <Section title="FUNCTION">
      <Row icon={FaStar} label="Match" bold check /><Row icon={FaCut} label="Substitution" /><Row icon={FaListUl} label="Unit Tests" />
    </Section>
    <Section title="TOOLS"><Row icon={FaRegFileCode} label="Code Generator" /></Section>
    <div className="mb-[5px] mt-auto flex items-center">
      <span className="flex h-5 w-[66px] items-center justify-center rounded-[3px] bg-[#4679ba] text-[11.500px] font-bold text-white">SPONSOR</span>
      <span className="mt-2 h-px flex-1 bg-[#dedede]" />
    </div>
  </div>
);

const Editor = () => (
  <div className="flex w-[965px] flex-col bg-[#ebebeb] px-2.5 pt-[7px] shadow-[inset_0_6px_8px_-4px_rgba(0,0,0,0.15),inset_-8px_0_8px_-6px_rgba(0,0,0,0.1)]">
    <div className="relative">
      <Heading>REGULAR EXPRESSION</Heading>
      <span className="absolute right-0 top-[3px] flex h-[22px] w-[151px] items-center justify-center rounded-[3px] bg-[#579481] text-[11.200px] text-white">6 matches, 41 steps (~0ms)</span>
    </div>
    <div className={`mt-[7px] flex h-[38px] items-center rounded-[3px] border border-[#bdbdbd] bg-white pb-0.5 pl-[11px] pr-[11px] text-[14px] shadow-[inset_0_2px_3px_rgba(0,0,0,0.06)] ${MONO}`}>
      <svg viewBox="0 0 4 12" className="h-3 w-1 text-[#bdbdbd]" fill="currentColor"><path d="M0 0h4v3H0zM0 4.500h4v3H0zM0 9h4v3H0z" /></svg>
      <span className="ml-1 w-[26px] text-[#b0b0b0]">r"</span><Yt />
      <span className="ml-auto text-[#b0b0b0]">"</span><span className="ml-[3px] text-[#4d8060]">gm</span><FaFlag className="ml-[3px] size-[13px] text-[#c6c6c6]" />
    </div>
    <div className="mt-1.5"><Heading>TEST STRING</Heading></div>
    <div className={`mt-[7px] h-[795px] rounded-[3px] border border-[#4679ba] bg-white pl-[5px] pt-1 text-[14.550px] text-[#333] shadow-[0_-1px_4px_rgba(70,121,186,0.25)] ${MONO}`}>
      <div className="flex h-[21px] w-fit items-center whitespace-pre border-r border-black leading-5">
        {SAMPLE.map(([s, k], i) => <span key={i} className={MARKS[k]}>{s}</span>)}
      </div>
    </div>
  </div>
);

const Explanation = () => (
  <div className="h-[292px] rounded-sm bg-[#fdfdfd] px-2.5 pt-[7px] shadow-[0_1px_1px_rgba(0,0,0,0.12)]">
    <Heading chevron>EXPLANATION</Heading>
    <div className="mt-1.5 whitespace-pre text-[13.600px] leading-[18px] text-[#3b3b3b]">
      <div className="flex h-[18px] items-center">
        <Tri className="ml-1.5 mr-[6px]" /><span className={`w-3.5 text-[#8a8a8a] ${MONO}`}>"</span><Yt />
        <span className={`ml-[5px] w-[13px] text-[#8a8a8a] ${MONO}`}>"</span><span className={`text-[14px] text-[#5d8a6e] ${MONO}`}>gm</span>
      </div>
      <div className="flex h-[18px] items-center">
        <Tri className="ml-[26px] mr-1.5" /><span className="w-[339px] text-[14.100px] font-semibold text-[#2b2b2b]">Match a single character present in the list below</span><Yt />
      </div>
      <div className="flex h-[18px] items-center pl-10">
        <span className={`h-[17px] w-[17px] bg-[#ffbf80] text-[14px] leading-[17px] text-[#7a4a10] ${MONO}`}>yt</span><span className="w-[238px]"> matches a single character in the list</span>
        <span className={`h-[17px] w-[17px] bg-[#f5df94] text-[14px] leading-[17px] text-[#6e5c14] ${MONO}`}>yt</span><span> (case sensitive)</span>
      </div>
      <div className="flex h-[18px] items-center"><Tri className="ml-[26px] mr-1.5" /><span className="text-[14.100px] font-semibold text-[#2b2b2b]">Global pattern flags</span></div>
      <div className="flex h-[18px] items-center pl-10"><span className={`w-[97px] text-[14px] text-[#560a8c] ${MONO}`}>g modifier:</span><b>g</b>lobal. All matches (don't return after first match)</div>
      <div className="flex h-[18px] items-center pl-10">
        <span className={`w-[97px] text-[14px] text-[#560a8c] ${MONO}`}>m modifier:</span><b>m</b>ulti line. Causes <span className={`h-[17px] bg-[#f5df94] leading-[17px] text-[#6e5c14] ${MONO}`}>^</span> and{' '}
        <span className={`h-[17px] bg-[#f5df94] leading-[17px] text-[#6e5c14] ${MONO}`}>$</span> to match the begin/end of each line (not only
      </div>
      <div className="h-[18px] pl-10">begin/end of string)</div>
    </div>
  </div>
);

const MatchInfo = () => (
  <div className="h-[293px] rounded-sm bg-[#fdfdfd] px-2.5 pt-[7px] shadow-[0_1px_1px_rgba(0,0,0,0.12)]">
    <Heading chevron>MATCH INFORMATION</Heading>
    <div className={`mt-[7px] flex h-[244px] overflow-hidden text-[12.500px] ${MONO}`}>
      <div className="flex-1">
        {MATCHES.map(({ n, range, text, dark }) => (
          <div key={n} className="mb-[5px] border-b border-[#ededed] pb-2.5">
            <div className="flex h-[26px] items-center justify-between text-[#5580bb]">Match {n}
              {n === 1 && <svg viewBox="0 0 14 13" className="mr-1 h-[13px] w-3.5" fill="none" stroke="#8c8c8c" strokeWidth="1.300"><path d="M6 1.700H2.500A1.500 1.500 0 0 0 1 3.200v7.300A1.500 1.500 0 0 0 2.500 12h7.300a1.500 1.500 0 0 0 1.500-1.500V9" /><path d="M4.500 8.500c0-3 1.500-4.500 4.500-4.500V1.200L13 5 9 8.300V6c-2.500 0-3.500.5-4.500 2.500z" fill="#8c8c8c" strokeWidth=".5" /></svg>}
            </div>
            <div className="mt-[5px] flex h-7 items-center">
              <span className={dark ? 'flex h-5 w-[81px] items-center bg-[#74c1ff] pl-1 text-[#333]' : 'flex h-5 w-[81px] items-center bg-[#c6e3ff] pl-1 text-[#333]'}>Full match</span>
              <span className="mx-2.5 text-[#8c8c8c]">{range}</span>
              <span className="mr-px flex h-7 flex-1 items-center rounded-sm bg-[#f4f4f4] pl-2.5 text-[#333]">{text}</span>
            </div>
          </div>
        ))}
        <div className="flex h-[26px] items-center text-[#5580bb]">Match 4</div>
      </div>
      <Bar thumb={<div className="h-[118px] w-full bg-[#cdcdcd]" />} />
    </div>
  </div>
);

const QuickReference = () => (
  <div className="h-[292px] rounded-sm bg-[#fdfdfd] px-2.5 pt-[7px] shadow-[0_1px_1px_rgba(0,0,0,0.12)]">
    <Heading chevron>QUICK REFERENCE</Heading>
    <div className="mt-[7px] flex h-[243px] overflow-hidden">
      <div className="w-[175px]">
        <div className={`mb-1 flex h-[27px] items-center rounded-[3px] border border-[#bdbdbd] bg-white pl-[5px] text-[11.800px] text-[#c3c3c3] ${MONO}`}>Search reference</div>
        {TOKENS.map((t) => <Row key={t.label} {...t} />)}
      </div>
      <Bar thumb={<div className="h-[171px] w-full bg-[#cdcdcd]" />} />
      <div className="ml-[5px] flex-1 border-l border-[#e6e6e6] pl-4 pr-2.5 text-[12.800px] text-[#4a4a4a]">
        {REFS.map(([d, c]) => (
          <div key={c} className="flex h-[27px] items-center justify-between">{d}<span className={`text-[11.800px] font-semibold text-[#3a7a52] ${MONO}`}>{c}</span></div>
        ))}
      </div>
      <Bar thumb={<div className="h-20 w-full bg-[#cdcdcd]" />} />
    </div>
  </div>
);

function RightMonitor() {
  return (
    <div className={`flex h-[1080px] w-[1920px] flex-col ${OPEN}`}>
      <div className="flex h-[1040px] bg-[#050507]">
        <div className="flex w-10 flex-col items-center justify-between pb-[18px] pt-2.5">
          <Opera className="size-5" />
          <div className="flex gap-[3px]">
            <i className="size-[3px] rounded-full bg-[#f4224f]" /><i className="size-[3px] rounded-full bg-[#f4224f]" /><i className="size-[3px] rounded-full bg-[#f4224f]" />
          </div>
        </div>
        <div className="w-px bg-[linear-gradient(#050507_0_6px,#e81f4a_6px,#c01a40_120px,#7a1128_300px,#2c0812_500px)]" />
        <div className="flex w-[1879px] flex-col">
          <Chrome />
          <Header />
          <div className="flex h-[921px]">
            <div className="flex w-[50px] flex-col items-center justify-between bg-[#e1e1e1] pb-2.5 pt-[11px]">
              <div className="flex flex-col gap-2.5">
                <Round icon={FaCode} active /><Round icon={FaBook} /><Round icon={FaUser} /><Round icon={FaGamepad} /><Round icon={FaWrench} /><Round icon={FaComments} />
              </div>
              <div className="flex flex-col gap-4"><Round icon={FaDollarSign} /><Round icon={FaHeart} /></div>
            </div>
            <Menu />
            <Editor />
            <div className="flex flex-1 flex-col gap-[11px] border-l border-white bg-[#f7f7f7] pl-[11px] pr-[11px] pt-[11px]">
              <Explanation />
              <MatchInfo />
              <QuickReference />
            </div>
          </div>
        </div>
      </div>
      <div className="flex h-10 items-center bg-[linear-gradient(90deg,#1f1e1c_0,#272321_150px,#272321_500px,#262020_760px,#1f1f1e_1200px)]">
        <Apps large={false} />
        <div className="ml-auto flex w-[64px] flex-col items-center text-[11.300px] leading-[18px] text-[#f2f2f2]"><span>09:24</span><span>22-10-2020</span></div>
      </div>
    </div>
  );
}

export default function App() {
  return (
    <div className="flex h-[1080px] w-[3840px] overflow-hidden">
      <LeftMonitor />
      <RightMonitor />
    </div>
  );
}
